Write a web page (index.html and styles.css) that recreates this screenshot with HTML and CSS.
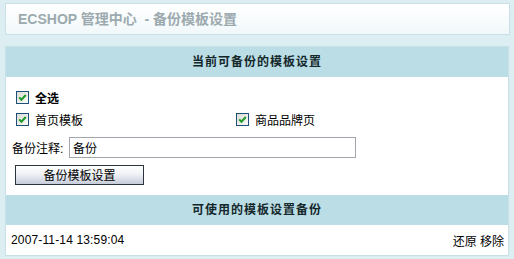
FILE: index.html
```html
<!DOCTYPE html>
<html lang="zh-CN">
<head>
    <meta charset="UTF-8">
    <title>ECSHOP 管理中心 - 备份模板设置</title>
    <link rel="stylesheet" href="styles.css">
</head>
<body>
    <h1 class="title">ECSHOP 管理中心&nbsp; - 备份模板设置</h1>

    <div class="list-div">
        <div class="th">当前可备份的模板设置</div>

        <div class="form-body">
            <label class="row check-all">
                <span class="cb"><svg width="11" height="11" viewBox="0 0 11 11"><path d="M2.2 5.4 L4.4 7.8 L8.8 3" stroke="#1e9a2a" stroke-width="2" fill="none"/></svg></span>
                全选
            </label>

            <div class="row checks">
                <label class="check">
                    <span class="cb"><svg width="11" height="11" viewBox="0 0 11 11"><path d="M2.2 5.4 L4.4 7.8 L8.8 3" stroke="#1e9a2a" stroke-width="2" fill="none"/></svg></span>
                    首页模板
                </label>
                <label class="check">
                    <span class="cb"><svg width="11" height="11" viewBox="0 0 11 11"><path d="M2.2 5.4 L4.4 7.8 L8.8 3" stroke="#1e9a2a" stroke-width="2" fill="none"/></svg></span>
                    商品品牌页
                </label>
            </div>

            <div class="row remark">
                <label for="remark">备份注释:</label>
                <input type="text" id="remark" value="备份">
            </div>

            <div class="row">
                <button class="btn">备份模板设置</button>
            </div>
        </div>

        <div class="th">可使用的模板设置备份</div>

        <div class="backup-row">
            <span class="date">2007-11-14 13:59:04</span>
            <span class="actions"><a href="#">还原</a> <a href="#">移除</a></span>
        </div>
    </div>
</body>
</html>
```

FILE: styles.css
```css
body {
    margin: 0;
    background: #ddeef2;
    font: 12px "Liberation Sans", "Noto Sans CJK SC", sans-serif;
    color: #000;
}

.title {
    margin: 3px 4px 0 5px;
    height: 30px;
    line-height: 30px;
    padding: 0 12px;
    border: 1px solid #c8e0e6;
    background: linear-gradient(#ffffff, #f1f8fa);
    color: #9caaaf;
    font-size: 14px;
    font-weight: bold;
    white-space: pre;
}

.list-div {
    margin: 11px 5px 0 5px;
    border: 1px solid #c8e0e6;
    background: #fff;
}

.th {
    height: 30px;
    line-height: 30px;
    background: #bbdde5;
    text-align: center;
    font-weight: bold;
    letter-spacing: 1px;
    color: #14282c;
}

.form-body {
    padding: 10px 6px 10px 6px;
}

.row {
    display: flex;
    align-items: center;
    height: 21px;
}

.checks {
    height: 23px;
    display: grid;
    grid-template-columns: 220px 1fr;
    margin-bottom: 6px;
}

.check-all {
    font-weight: bold;
}

.check {
    display: flex;
    align-items: center;
}

.cb {
    display: inline-flex;
    align-items: center;
    justify-content: center;
    width: 11px;
    height: 11px;
    margin: 0 6px 0 4px;
    border: 1px solid #1c4f7a;
    background: linear-gradient(135deg, #dcdcd6, #fbfbf9);
}

.remark {
    margin-bottom: 6px;
}

.remark label {
    width: 57px;
}

.remark input {
    box-sizing: border-box;
    width: 287px;
    height: 21px;
    margin: 0;
    padding: 0 3px;
    border: 1px solid #a0a6ab;
    font: 12px "Liberation Sans", "Noto Sans CJK SC", sans-serif;
}

.btn {
    box-sizing: border-box;
    width: 129px;
    height: 20px;
    margin-left: 3px;
    padding: 0;
    border: 1px solid #2c3440;
    background: linear-gradient(#ffffff 0%, #f0f2f6 45%, #c6ccda 100%);
    font: 12px "Liberation Sans", "Noto Sans CJK SC", sans-serif;
    color: #000;
}

.backup-row {
    display: flex;
    justify-content: space-between;
    align-items: center;
    height: 30px;
    padding: 0 4px 0 5px;
}

.date {
    letter-spacing: 0.15px;
}

.actions a {
    color: #000;
    text-decoration: none;
}
```
